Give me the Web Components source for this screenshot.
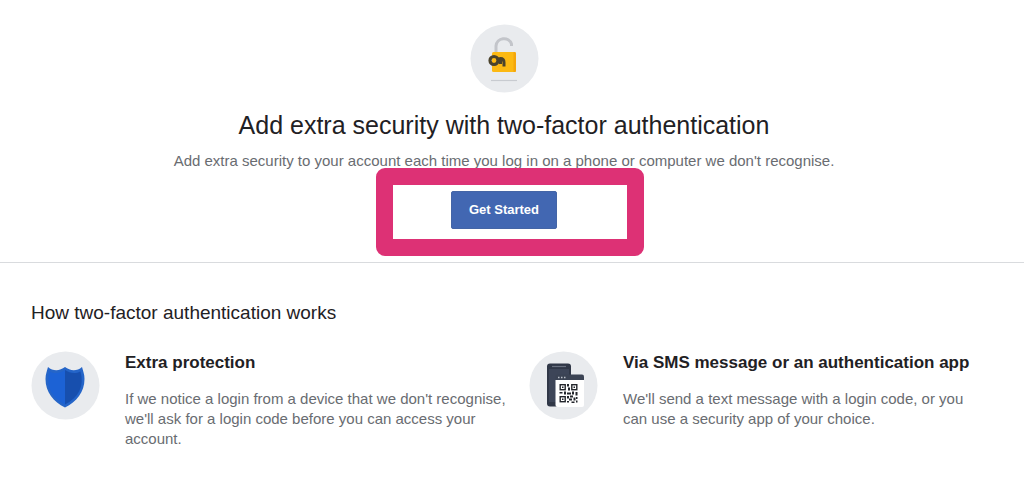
<!DOCTYPE html>
<html lang="en">
<head>
<meta charset="utf-8">
<title>Two-factor authentication</title>
<style>
  body { margin: 0; background: #fff; color: #1f2124; font-family: "Liberation Sans", Arial, sans-serif; }
</style>
</head>
<body>
<two-factor-page></two-factor-page>

<template id="page">
  <style>
    :host { display: block; }
  </style>
  <main>
    <setup-hero>
      <lock-icon slot="icon"></lock-icon>
      <span slot="title">Add extra security with two-factor authentication</span>
      <span slot="text">Add extra security to your account each time you log in on a phone or computer we don't recognise.</span>
      <primary-button slot="action">Get Started</primary-button>
    </setup-hero>
    <how-it-works>
      <span slot="title">How two-factor authentication works</span>
      <feature-item>
        <shield-icon slot="icon"></shield-icon>
        <span slot="title">Extra protection</span>
        If we notice a login from a device that we don't recognise, we'll ask for a login code before you can access your account.
      </feature-item>
      <feature-item>
        <devices-icon slot="icon"></devices-icon>
        <span slot="title">Via SMS message or an authentication app</span>
        We'll send a text message with a login code, or you can use a security app of your choice.
      </feature-item>
    </how-it-works>
  </main>
</template>

<template id="hero">
  <style>
    :host { display: block; border-bottom: 1px solid #d9dbde; }
    section { display: flex; flex-direction: column; align-items: center; padding: 24px 16px 6px 0; text-align: center; }
    h1 { margin: 16px 0 0; font-size: 25px; line-height: 32px; font-weight: 400; }
    p { margin: 10px 0 0; font-size: 15px; line-height: 20px; color: #696c71; }
    .action { position: relative; display: flex; justify-content: center; margin-top: 20px; padding-bottom: 27px; }
    .marker { position: absolute; z-index: 1; left: -75px; right: -87px; top: -23px; bottom: 0; border: 17px solid #dd3175; border-radius: 9px; pointer-events: none; box-sizing: border-box; }
  </style>
  <section>
    <slot name="icon"></slot>
    <h1><slot name="title"></slot></h1>
    <p><slot name="text"></slot></p>
    <div class="action"><slot name="action"></slot><div class="marker"></div></div>
  </section>
</template>

<template id="button">
  <style>
    :host { display: block; }
    button { display: block; height: 38px; padding: 0 17px; border: 1px solid #4465a6; border-radius: 2px; background: #4267b2; color: #fff; font: bold 13px/20px "Liberation Sans", Arial, sans-serif; cursor: pointer; }
  </style>
  <button type="button"><slot></slot></button>
</template>

<template id="works">
  <style>
    :host { display: block; }
    section { padding: 38px 48px 24px 31px; }
    h2 { margin: 0 0 26px; font-size: 19px; line-height: 24px; font-weight: 400; }
    .grid { display: grid; grid-template-columns: 484fr 447fr; gap: 14px; }
  </style>
  <section>
    <h2><slot name="title"></slot></h2>
    <div class="grid"><slot></slot></div>
  </section>
</template>

<template id="feature">
  <style>
    :host { display: flex; align-items: flex-start; gap: 25px; }
    .copy { flex: 1; min-width: 0; }
    h3 { margin: 0; font-size: 17px; line-height: 24px; font-weight: 700; }
    p { margin: 14px 0 0; font-size: 15px; line-height: 20px; color: #696c71; }
  </style>
  <slot name="icon"></slot>
  <div class="copy">
    <h3><slot name="title"></slot></h3>
    <p><slot></slot></p>
  </div>
</template>

<template id="lock">
  <style>:host { display: block; flex: none; } svg { display: block; }</style>
  <svg width="69" height="69" viewBox="0 0 69 69" aria-hidden="true">
    <circle cx="34.500" cy="34.500" r="34" fill="#e9ebee"/>
    <path d="M26 28V22a8 8 0 0 1 15.500-2v2" fill="none" stroke="#c3c5ca" stroke-width="3"/>
    <rect x="22" y="28" width="24" height="20" rx="1.500" fill="#fcb913"/>
    <path d="M43.500 28h1a1.500 1.500 0 0 1 1.500 1.500v17a1.500 1.500 0 0 1-1.500 1.500h-1z" fill="#f4a60c"/>
    <circle cx="24" cy="36.500" r="4" fill="none" stroke="#4b432d" stroke-width="3.200"/>
    <path d="M27 35.500l3.500-1c2.500 0 3.500 2 3.500 4v4M30.500 35v5" fill="none" stroke="#4b432d" stroke-width="3"/>
    <path d="M21 56.500h26" stroke="#c8cbd0" stroke-width="1.200"/>
  </svg>
</template>

<template id="shield">
  <style>:host { display: block; flex: none; } svg { display: block; }</style>
  <svg width="69" height="69" viewBox="0 0 69 69" aria-hidden="true">
    <circle cx="34.500" cy="34.500" r="34" fill="#e9ebee"/>
    <path d="M17 16c5 4.500 12 4 17 0c5 4 12 4.500 17 0c1 4 2.500 7 2.500 12c0 13-8 23-19.500 28.500C22.500 51 14.500 41 14.500 28c0-5 1.500-8 2.500-12z" fill="#2565c8"/>
    <path d="M18.500 20.500c5 2.500 10.500 2 15.500-1.500c5 3.500 10.500 4 15.500 1.500c4 15-2 26-15.500 33C20.500 46.500 14.500 35.500 18.500 20.500z" fill="#1c62d5"/>
    <path d="M34 19c5 3.500 10.500 4 15.500 1.500c4 15-2 26-15.500 33z" fill="#174fae"/>
  </svg>
</template>

<template id="devices">
  <style>:host { display: block; flex: none; } svg { display: block; }</style>
  <svg width="69" height="69" viewBox="0 0 69 69" aria-hidden="true">
    <circle cx="34.500" cy="34.500" r="34" fill="#e9ebee"/>
    <rect x="18" y="12.500" width="24" height="43" rx="3" fill="#303747"/>
    <rect x="20" y="18" width="20" height="33" fill="#3d4558"/>
    <path d="M23 15.500h14" stroke="#6a7180" stroke-width="1.200"/>
    <rect x="26.500" y="23.500" width="28.500" height="20" rx="2" fill="#3b4354"/>
    <path d="M26.500 29h28.500v25a2 2 0 0 1-2 2H28.500a2 2 0 0 1-2-2z" fill="#fff"/>
    <path d="M29 26.500h1.500M32 26.500h1.500M35 26.500h1.500" stroke="#b9bec7" stroke-width="1.500"/>
    <g transform="translate(0 1.500)">
      <g fill="none" stroke="#22252b" stroke-width="1.400">
        <rect x="31.200" y="32.200" width="5" height="5"/>
        <rect x="42.800" y="32.200" width="5" height="5"/>
        <rect x="31.200" y="44.200" width="5" height="5"/>
      </g>
      <path d="M33 34h1.500v1.500H33zM44.500 34H46v1.500h-1.500zM33 46h1.500v1.500H33zM38 31.500h2V34h-2zM39 35h2v3h-2zM30.500 39.500h3v1.500h-3zM35 39h2v3h-2zM38 40h4v2h-4zM43 39h2v3h-2zM46.500 39.500h2V43h-2zM38 43.500h2V46h-2zM41 43h3v2h-3zM40 46h3v2h-3zM38 48.500h2V50h-2zM44.500 45h2v3h-2zM47 44.500h1.500v2H47zM42.500 49h3v1.500h-3zM47 48h1.500v2H47z" fill="#22252b"/>
    </g>
  </svg>
</template>

<script>
  const elements = {
    'primary-button': 'button',
    'lock-icon': 'lock',
    'shield-icon': 'shield',
    'devices-icon': 'devices',
    'feature-item': 'feature',
    'setup-hero': 'hero',
    'how-it-works': 'works',
    'two-factor-page': 'page'
  };
  for (const [name, id] of Object.entries(elements)) {
    customElements.define(name, class extends HTMLElement {
      constructor() {
        super();
        this.attachShadow({ mode: 'open' })
          .append(document.getElementById(id).content.cloneNode(true));
      }
    });
  }
</script>
</body>
</html>
